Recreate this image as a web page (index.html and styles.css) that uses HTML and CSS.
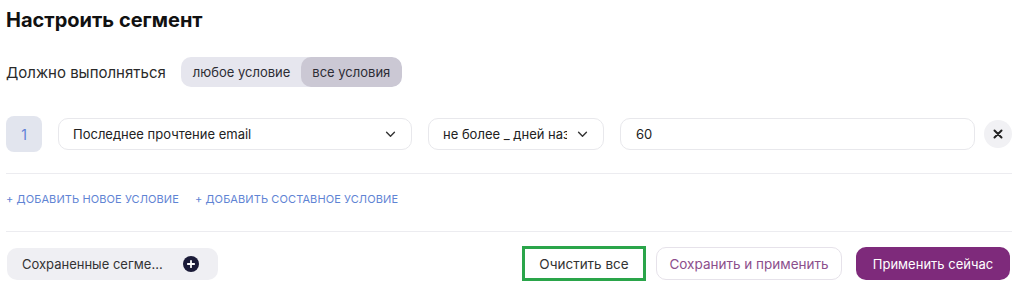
FILE: index.html
```html
<!DOCTYPE html>
<html lang="ru">
<head>
<meta charset="utf-8">
<link rel="stylesheet" href="styles.css">
</head>
<body>
<div class="page">
  <h1 class="title">Настроить сегмент</h1>
  <div class="match">
    <span class="match-label">Должно выполняться</span>
    <div class="toggle">
      <span class="toggle-opt">любое условие</span>
      <span class="toggle-opt active">все условия</span>
    </div>
  </div>
  <div class="cond">
    <div class="num">1</div>
    <div class="select wide">
      <span class="select-text">Последнее прочтение email</span>
      <svg class="chev" viewBox="0 0 12 8" width="11" height="7"><path d="M1.5 1.5 L6 6 L10.5 1.5" fill="none" stroke="#333" stroke-width="1.6" stroke-linecap="round" stroke-linejoin="round"/></svg>
    </div>
    <div class="select narrow">
      <span class="select-text clip">не более _ дней назад</span>
      <svg class="chev" viewBox="0 0 12 8" width="11" height="7"><path d="M1.5 1.5 L6 6 L10.5 1.5" fill="none" stroke="#333" stroke-width="1.6" stroke-linecap="round" stroke-linejoin="round"/></svg>
    </div>
    <div class="input">60</div>
    <div class="close">
      <svg viewBox="0 0 10 10" width="10" height="10"><path d="M1.5 1.5 L8.5 8.5 M8.5 1.5 L1.5 8.5" stroke="#222" stroke-width="2" stroke-linecap="round"/></svg>
    </div>
  </div>
  <div class="divider first"></div>
  <div class="links">
    <span class="link">+ ДОБАВИТЬ НОВОЕ УСЛОВИЕ</span>
    <span class="link">+ ДОБАВИТЬ СОСТАВНОЕ УСЛОВИЕ</span>
  </div>
  <div class="divider second"></div>
  <div class="footer">
    <div class="saved">
      <span>Сохраненные сегме...</span>
      <span class="plus">
        <svg viewBox="0 0 16 16" width="16" height="16"><circle cx="8" cy="8" r="8" fill="#1b1b38"/><path d="M8 4.8 V11.2 M4.8 8 H11.2" stroke="#fff" stroke-width="1.8" stroke-linecap="round"/></svg>
      </span>
    </div>
    <div class="spacer"></div>
    <div class="btn clear">Очистить все</div>
    <div class="btn save">Сохранить и применить</div>
    <div class="btn apply">Применить сейчас</div>
  </div>
</div>
</body>
</html>
```
FILE: styles.css
```css
* { box-sizing: border-box; }
html, body { margin: 0; padding: 0; background: #fff; }
body { font-family: Inter, "Noto Sans", "DejaVu Sans", sans-serif; color: #222; }
.page { padding: 0 12px 0 6px; width: 1024px; }
.title { margin: 0; padding-top: 7px; font-size: 20px; font-weight: 700; line-height: 26px; color: #111; }
.match { display: flex; align-items: center; gap: 15px; margin-top: 24px; height: 30px; }
.match-label { font-size: 15px; color: #2a2a2a; }
.toggle { display: flex; background: #e6e6ee; border-radius: 10px; height: 30px; overflow: hidden; }
.toggle-opt { display: flex; align-items: center; padding: 0 11px 0 12px; font-size: 13px; color: #2c2c34; }
.toggle-opt.active { background: #cbc8d4; border-radius: 10px; padding: 0 12px 0 11px; }
.cond { display: flex; align-items: center; gap: 16px; margin-top: 29px; height: 36px; }
.num { width: 36px; height: 36px; border-radius: 8px; background: #e2e5ee; color: #6081d6; font-size: 14px; display: flex; align-items: center; justify-content: center; flex: none; }
.select, .input { height: 32px; border: 1px solid #e8e8ec; border-radius: 10px; display: flex; align-items: center; font-size: 13px; color: #222; background: #fff; }
.select { padding: 0 15px 0 14px; justify-content: space-between; gap: 10px; }
.select.wide { flex: 1 1 0; }
.select.narrow { width: 176px; flex: none; }
.select-text { white-space: nowrap; }
.select-text.clip { overflow: hidden; width: 124px; }
.chev { flex: none; }
.input { flex: 1 1 0; padding: 0 15px; }
.close { width: 28px; height: 28px; border-radius: 50%; background: #f1f1f4; display: flex; align-items: center; justify-content: center; margin-left: -7px; flex: none; }
.divider { height: 1px; background: #ececf0; }
.divider.first { margin-top: 21px; }
.links { display: flex; gap: 16px; height: 49px; align-items: center; }
.link { font-size: 11px; color: #5f84d4; letter-spacing: 0.1px; }
.divider.second { margin-top: 8px; }
.footer { display: flex; align-items: center; margin-top: 14px; height: 35px; }
.saved { display: flex; align-items: center; justify-content: space-between; width: 211px; height: 32px; margin-left: 1px; padding: 0 19px 0 15px; background: #efeff3; border-radius: 10px; font-size: 13px; color: #333; }
.plus { display: flex; }
.spacer { flex: 1; }
.btn { display: flex; align-items: center; justify-content: center; font-size: 13.5px; }
.clear { width: 124px; height: 35px; border: 3px solid #2aa54a; color: #333; }
.save { width: 186px; height: 33px; margin-left: 10px; border: 1px solid #e6e2ea; border-radius: 10px; color: #8c4f8c; }
.apply { width: 154px; height: 33px; margin-left: 14px; margin-right: 2px; background: #7e2a7b; border-radius: 10px; color: #fff; font-size: 13px; }
```
